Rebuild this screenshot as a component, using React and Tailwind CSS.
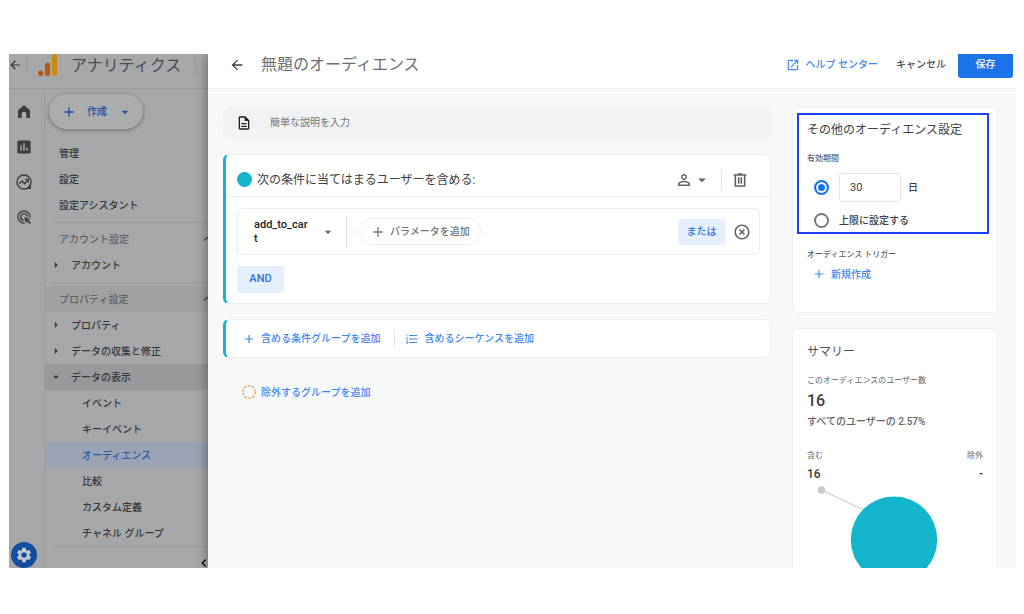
import { useState } from 'react';
import {
  MdAdd,
  MdAdsClick,
  MdArrowBack,
  MdArrowDropDown,
  MdArrowRight,
  MdChevronLeft,
  MdFormatListNumbered,
  MdHighlightOff,
  MdInsertChart,
  MdKeyboardArrowUp,
  MdOpenInNew,
  MdOutlineDescription,
  MdPersonOutline,
  MdSettings,
} from 'react-icons/md';

const TOP_LINKS = ['管理', '設定', '設定アシスタント'];

const DATA_DISPLAY = [
  { label: 'イベント' },
  { label: 'キーイベント' },
  { label: 'オーディエンス', active: true },
  { label: '比較' },
  { label: 'カスタム定義' },
  { label: 'チャネル グループ' },
];

function HomeIcon() {
  return (
    <svg className="w-4 h-4" viewBox="0 0 24 24" fill="currentColor">
      <path d="M12 2 3 9v12h5.5v-6a3.5 3.5 0 0 1 7 0v6H21V9z" />
    </svg>
  );
}

function ExploreIcon() {
  return (
    <svg className="w-4 h-4" viewBox="0 0 24 24" fill="none" stroke="currentColor" strokeWidth={2}>
      <path d="M12 1.5a10.500 10.500 0 1 0 0 21 10.500 10.500 0 0 0 0-21z" />
      <path d="M22.500 15v7.500H15z" fill="currentColor" stroke="none" />
      <path d="m5 14.500 4-4 4 4 5-5.500" />
      <path d="M14 8h4.500v4.500" />
    </svg>
  );
}

function TrashIcon() {
  return (
    <svg className="w-4 h-4" viewBox="0 0 24 24" fill="none" stroke="currentColor" strokeWidth={2.4}>
      <path d="M2.500 4.500h19M8.500 3h7M5 4.500v16.500h14v-16.500M10 8v9.500M14 8v9.500" />
    </svg>
  );
}

function AnalyticsLogo() {
  return (
    <svg className="w-5 h-[23px]" viewBox="0 0 20 23">
      <rect x="14" y="0" width="5" height="22" rx="2.500" fill="#c98a12" />
      <rect x="7" y="8.500" width="5" height="13.500" rx="2.500" fill="#b35a14" />
      <circle cx="2.700" cy="19.300" r="2.700" fill="#b35a14" />
    </svg>
  );
}

function TreeLink({ label, open }) {
  return (
    <a href="#" className={`flex items-center h-[26px] pl-1 ${open ? 'bg-[#98999b]' : ''}`}>
      {open ? <MdArrowDropDown className="w-3.5 h-3.5" /> : <MdArrowRight className="w-3.5 h-3.5" />}
      <span className="ml-2">{label}</span>
    </a>
  );
}

function GroupHeading({ label, shaded }) {
  return (
    <button
      className={`flex w-full items-center justify-between h-[26px] pl-3.5 text-[#626366] ${
        shaded ? 'bg-[#a0a1a3]' : ''
      }`}
    >
      {label}
      <MdKeyboardArrowUp className="w-3.5 h-3.5 -mr-1.5 text-[#3a3b3d]" />
    </button>
  );
}

function Sidebar() {
  return (
    <div className="w-[199px] shrink-0 flex flex-col bg-[#a6a7a9] text-[#36373a]">
      <div className="h-[35px] shrink-0 flex items-start border-b border-[#999a9c]">
        <button aria-label="戻る" className="h-[22px] -ml-px">
          <MdArrowBack className="w-3.5 h-3.5" />
        </button>
        <div className="ml-1 h-[22px] border-l border-[#9b9c9e]" />
        <div className="ml-[11px]">
          <AnalyticsLogo />
        </div>
        <span className="ml-[13px] text-base leading-6 text-[#4a4b4d]">アナリティクス</span>
        <div className="ml-auto mr-3 h-[22px] border-l border-[#9b9c9e]" />
      </div>

      <div className="flex-1 flex min-h-0">
        {/* Icon rail */}
        <div className="w-9 shrink-0 flex flex-col items-center justify-between border-r border-[#9b9c9e] pt-[15px] pr-1.5">
          <div className="flex flex-col gap-[19px] text-[#3c3d40]">
            <button aria-label="ホーム"><HomeIcon /></button>
            <button aria-label="レポート"><MdInsertChart className="w-4 h-4 scale-110" /></button>
            <button aria-label="探索"><ExploreIcon /></button>
            <button aria-label="広告"><MdAdsClick className="w-4 h-4" /></button>
          </div>
          <button
            aria-label="管理"
            className="w-[26px] h-[26px] shrink-0 rounded-full bg-[#144f9f] text-[#c3c9d2] flex items-center justify-center"
          >
            <MdSettings className="w-[18px] h-[18px]" />
          </button>
        </div>

        {/* Admin navigation */}
        <nav className="flex-1 min-w-0 pt-[5px] text-[10px] font-medium">
          <button className="ml-1 mb-[11px] w-[94px] h-[35px] rounded-full bg-[#abacae] shadow-[0_1px_4px_rgba(0,0,0,0.35)] flex items-center pl-3 text-[#174ea6]">
            <MdAdd className="w-4 h-4" />
            <span className="ml-2.5">作成</span>
            <MdArrowDropDown className="ml-2.5 w-4 h-4" />
          </button>
          {TOP_LINKS.map((label) => (
            <a key={label} href="#" className="flex items-center h-[26px] pl-3.5">
              {label}
            </a>
          ))}
          <hr className="ml-2 my-1 -mb-px border-[#98999b]" />
          <div className="pt-1">
            <GroupHeading label="アカウント設定" />
            <TreeLink label="アカウント" />
          </div>
          <hr className="ml-2 mt-1 mb-[3px] border-[#98999b]" />
          <GroupHeading label="プロパティ設定" shaded />
          <TreeLink label="プロパティ" />
          <TreeLink label="データの収集と修正" />
          <TreeLink label="データの表示" open />
          {DATA_DISPLAY.map((item) => (
            <a
              key={item.label}
              href="#"
              className={`flex items-center h-[26px] pl-[37px] ${
                item.active ? 'bg-[#99a3b3] text-[#2b5ca8]' : ''
              }`}
            >
              {item.label}
            </a>
          ))}
          <hr className="ml-2 border-[#98999b]" />
          <button aria-label="閉じる" className="flex ml-auto mt-2 -mr-1">
            <MdChevronLeft className="w-4 h-4 text-black" />
          </button>
        </nav>
      </div>
    </div>
  );
}

function DrawerHeader() {
  return (
    <header className="h-[35px] shrink-0 flex items-start bg-white border-b border-[#eceef0] pl-[21px] pr-[3px] text-[10px] leading-[22px] font-medium">
      <button aria-label="戻る" className="h-[22px] text-[#3c4043]">
        <MdArrowBack className="w-4 h-4" />
      </button>
      <h1 className="ml-4 text-base leading-[22px] font-normal text-[#6b6f74]">無題のオーディエンス</h1>
      <a href="#" className="ml-auto flex items-center text-[#3f86f2]">
        <MdOpenInNew className="w-3.5 h-3.5 mr-1.5" />
        ヘルプ センター
      </a>
      <button className="ml-[18px] text-[#4a4e52]">キャンセル</button>
      <button className="ml-3 w-[55px] h-6 pb-0.5 rounded-b-[3px] bg-[#1a73e8] text-white">保存</button>
    </header>
  );
}

function IncludeGroup() {
  return (
    <section className="mt-4 bg-white rounded-md border border-l-3 border-[#eceef0] border-l-[#12b5cb]">
      <div className="h-[42px] pt-2 pl-[11px] pr-[22px] flex items-center border-b border-[#eceef0]">
        <span className="w-[15px] h-[15px] rounded-full bg-[#12b5cb]" />
        <h2 className="ml-[5px] text-xs font-normal text-[#3c4043]">次の条件に当てはまるユーザーを含める:</h2>
        <div className="ml-auto flex items-center text-[#5f6368]">
          <button aria-label="スコープ" className="flex items-center">
            <MdPersonOutline className="w-[18px] h-[18px]" />
            <MdArrowDropDown className="w-[18px] h-[18px]" />
          </button>
          <div className="ml-2.5 mr-2.5 h-[22px] border-l border-[#e3e5e8]" />
          <button aria-label="削除"><TrashIcon /></button>
        </div>
      </div>

      <div className="pt-[11px] pb-[10px] pl-[11px] pr-2.5">
        <div className="h-[47px] flex items-center rounded-md border border-[#eceef0] pl-4 pr-2 text-[10px] font-medium">
          <button className="flex items-center text-left text-[#202124]">
            <span className="w-[54px] break-all text-[11px] leading-[14px] font-medium">add_to_cart</span>
            <MdArrowDropDown className="w-4 h-4 ml-3 text-[#5f6368]" />
          </button>
          <div className="ml-2.5 h-8 border-l border-[#e3e5e8]" />
          <button className="ml-3 h-[27px] px-2.5 flex items-center gap-1 rounded-full border border-dotted border-[#dcdfe3] text-[#70757a]">
            <MdAdd className="w-4 h-4" />
            パラメータを追加
          </button>
          <button className="ml-auto w-[47px] h-[26px] rounded-[3px] bg-[#e6effd] text-[#3474da]">または</button>
          <button aria-label="条件を削除" className="ml-2 text-[#5f6368]">
            <MdHighlightOff className="w-[18px] h-[18px]" />
          </button>
        </div>
        <button className="mt-[11px] block w-[47px] h-[27px] rounded-[3px] bg-[#e6effd] text-[#2f72da] text-[11px] font-medium">
          AND
        </button>
      </div>
    </section>
  );
}

function SettingsCard() {
  const [duration, setDuration] = useState('days');
  const radio =
    'appearance-none w-[15px] h-[15px] rounded-full border-2 border-[#777b80] checked:border-[#1a73e8] checked:bg-[#1a73e8] checked:shadow-[inset_0_0_0_2px_#fff]';

  return (
    <section className="bg-white rounded-md border border-[#eceef0] pb-7 text-[#3c4043]">
      <div className="mt-[5px] ml-1 mr-2 border-2 border-[#1f3fff] pt-[5px] pb-0.5 pl-2">
        <h2 className="text-xs leading-5 font-normal">その他のオーディエンス設定</h2>
        <p className="mt-[11px] text-[8px] leading-4 font-medium text-[#5f6368]">有効期間</p>
        <div className="mt-1.5 pl-[7px] flex items-center text-[10px] font-medium">
          <input
            type="radio"
            name="duration"
            aria-label="日数を指定"
            className={radio}
            checked={duration === 'days'}
            onChange={() => setDuration('days')}
          />
          <input
            type="text"
            aria-label="日数"
            defaultValue="30"
            className="ml-2.5 w-[62px] h-[29px] rounded-[3px] border border-[#e3e5e8] px-2.5 font-normal text-[11px]"
          />
          <span className="ml-[7px]">日</span>
        </div>
        <label className="mt-2 pl-[7px] h-5 flex items-center gap-2.5 text-[10px] font-medium">
          <input
            type="radio"
            name="duration"
            className={radio}
            checked={duration === 'max'}
            onChange={() => setDuration('max')}
          />
          上限に設定する
        </label>
      </div>
      <div className="pl-3.5">
        <p className="mt-[13px] text-[8px] leading-4 font-medium text-[#5f6368]">オーディエンス トリガー</p>
        <button className="mt-px h-5 pl-[5px] flex items-center gap-[5px] text-[10px] font-medium text-[#3f86f2]">
          <MdAdd className="w-3.5 h-3.5" />
          新規作成
        </button>
      </div>
    </section>
  );
}

function SummaryCard() {
  return (
    <section className="mt-[15px] bg-white rounded-md border border-[#eceef0] pt-[13px] pb-6 px-3.5 text-[#3c4043]">
      <h2 className="text-xs leading-5 font-normal text-[#4f5357]">サマリー</h2>
      <p className="mt-[11px] text-[8px] leading-4 text-[#5f6368]">このオーディエンスのユーザー数</p>
      <p className="mt-0.5 text-base leading-5 font-medium">16</p>
      <p className="mt-px text-[10px] leading-5 font-medium text-[#5f6368]">すべてのユーザーの 2.57%</p>
      <div className="mt-4 flex justify-between">
        <div>
          <p className="text-[8px] leading-4 text-[#5f6368]">含む</p>
          <p className="text-xs leading-5 font-medium">16</p>
        </div>
        <div className="text-right">
          <p className="text-[8px] leading-4 text-[#5f6368]">除外</p>
          <p className="text-xs leading-5 font-medium">-</p>
        </div>
      </div>
      <svg className="w-full" viewBox="0 0 177 104">
        <path d="M14.500 6 56 25.500" stroke="#dadada" strokeWidth={1.5} />
        <circle cx="14.500" cy="6" r="3.700" fill="#c8c8c8" />
        <circle cx="87.500" cy="56" r="43.500" fill="#12b5cb" />
      </svg>
    </section>
  );
}

export default function App() {
  return (
    <div className="h-screen bg-white pt-[54px] pb-[46px] pl-[9px] pr-2 font-['Roboto','Noto_Sans_CJK_JP',sans-serif]">
      <div className="h-full flex overflow-hidden">
        <Sidebar />

        {/* Audience drawer */}
        <main className="relative flex-1 min-w-0 flex flex-col bg-[#f7f8fa] shadow-[0_0_12px_rgba(0,0,0,0.45)]">
          <DrawerHeader />
          <div className="flex-1 min-h-0 overflow-hidden flex items-start gap-[21px] pt-[18px] pl-[15px] pr-[18px]">
            <div className="flex-1 min-w-0">
              <label className="h-[31px] flex items-center rounded-md bg-[#f1f2f4] pl-[13px] text-[#202124]">
                <MdOutlineDescription className="w-4 h-4" />
                <input
                  type="text"
                  aria-label="説明"
                  placeholder="簡単な説明を入力"
                  className="ml-[18px] flex-1 bg-transparent text-[10px] outline-none placeholder:text-[#70757a]"
                />
              </label>

              <IncludeGroup />

              <div className="mt-[15px] h-[39px] flex items-center bg-white rounded-md border border-l-3 border-[#eceef0] border-l-[#12b5cb] pl-4 text-[10px] font-medium text-[#3f86f2]">
                <button className="flex items-center gap-[5px]">
                  <MdAdd className="w-3.5 h-3.5" />
                  含める条件グループを追加
                </button>
                <div className="ml-3.5 mr-2.5 h-[18px] border-l border-[#e3e5e8]" />
                <button className="flex items-center gap-[5px]">
                  <MdFormatListNumbered className="w-3.5 h-3.5" />
                  含めるシーケンスを追加
                </button>
              </div>

              <button className="mt-6 ml-[19px] h-5 flex items-center gap-[5px] text-[10px] font-medium text-[#3f86f2]">
                <svg className="w-3.5 h-3.5" viewBox="0 0 14 14" fill="none">
                  <circle cx="7" cy="7" r="6.200" stroke="#f0904a" strokeWidth={1.2} strokeDasharray="2.400 1.500" />
                </svg>
                除外するグループを追加
              </button>
            </div>

            <aside className="w-[206px] shrink-0">
              <SettingsCard />
              <SummaryCard />
            </aside>
          </div>
        </main>
      </div>
    </div>
  );
}
